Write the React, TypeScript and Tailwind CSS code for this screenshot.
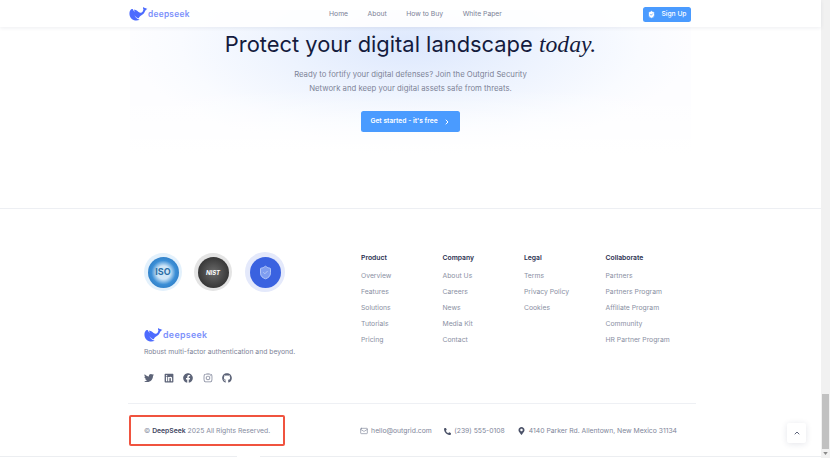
import { ChevronRight, ChevronUp, Mail, ShieldCheck } from "lucide-react";
import { FaFacebook, FaGithub, FaInstagram, FaLinkedin, FaMapMarkerAlt, FaPhoneAlt, FaTwitter } from "react-icons/fa";

function Whale({ className }: { className: string }) {
  return (
    <svg viewBox="0 0 24 18" className={className} fill="#4d6bfe">
      <path d="M23.600 1.600c-.5-.2-.8.3-1.200.6-.9-.9-1.700-1.200-2.600-.9-.4-1-1.200-1.300-1.900-.7-.3.8.1 1.700.5 2.300-.5 1.500-.9 3.100-2.400 4.100-1.200.8-2.600.5-3.900-.5-1.400-1-3-2.900-5.600-3.200-.2 1.100.1 2.100.8 3-1.300-.8-2.100-2-2.500-3.400C3.100 1.400 1.100 3.600.5 6.500-.2 10 1 13.500 3.700 15.600c2.800 2.100 6.700 2.300 9.900.8-1.300-.2-2.500-.7-3.500-1.500-1.200-.9-2.300-2.400-3.500-4.400 1.600 1.900 3.500 3.500 5.900 4 .4-1.600 1.200-2.600 2.400-3.300 2.700-1.600 5-3.500 5.700-6.500 1-.5 1.900-1.200 2.300-2 .2-.4.300-.9.100-1.100z" />
      <circle cx="16.600" cy="5" r=".8" fill="#fff" />
    </svg>
  );
}

function Badge({ ring, inner, children }: { ring: string; inner: string; children: React.ReactNode }) {
  return (
    <div className={`flex h-[38px] w-[38px] items-center justify-center rounded-full ${ring}`}>
      <div className={`flex h-[31px] w-[31px] items-center justify-center rounded-full ${inner}`}>{children}</div>
    </div>
  );
}

const columns = [
  { title: "Product", items: ["Overview", "Features", "Solutions", "Tutorials", "Pricing"] },
  { title: "Company", items: ["About Us", "Careers", "News", "Media Kit", "Contact"] },
  { title: "Legal", items: ["Terms", "Privacy Policy", "Cookies"] },
  { title: "Collaborate", items: ["Partners", "Partners Program", "Affiliate Program", "Community", "HR Partner Program"] },
];

export default function App() {
  return (
    <div className="relative flex h-[458px] w-[830px] overflow-hidden bg-white font-['Inter',sans-serif] text-[#6b7189]">
      <main className="relative flex h-[458px] w-[821px] flex-col">
        <header className="absolute top-0 right-0 left-0 z-10 flex h-[27px] items-center bg-white/90 pt-[1px] pl-[129px] shadow-[0_1px_4px_rgba(30,40,80,0.08)]">
          <div className="flex w-[200px] items-center">
            <Whale className="h-[14px] w-[19px]" />
            <span className="text-[8.300px] leading-none font-semibold tracking-[0.3px] text-[#7b90fb]">deepseek</span>
          </div>
          <nav className="flex gap-[19.500px] text-[6.800px] text-[#7b8196]">
            <span>Home</span>
            <span>About</span>
            <span>How to Buy</span>
            <span>White Paper</span>
          </nav>
          <button className="mr-[130px] ml-auto flex h-[15px] w-[48px] items-center justify-center gap-[5px] rounded-[2.500px] bg-[#4a9bff] text-[6.700px] font-medium text-white">
            <ShieldCheck className="h-[9px] w-[9px]" fill="white" stroke="#4a9bff" />
            Sign Up
          </button>
        </header>

        <section className="relative flex h-[208px] flex-col items-center overflow-hidden pt-[27px]">
          <div className="absolute top-[10px] left-[130px] h-[145px] w-[561px] bg-[linear-gradient(to_bottom,transparent_55%,#ffffff_100%),radial-gradient(ellipse_50%_75%_at_50%_24%,#dde8fd_0%,#edf3fe_45%,#f9fbff_82%,#fdfdff_100%)]" />
          <div className="absolute top-[27px] left-[143px] h-[32px] w-[535px] bg-[radial-gradient(#e0e7f5_0.6px,transparent_0.7px)] bg-[length:8px_8px]" />
          <h1 className="relative text-[21.900px] leading-[34px] font-normal whitespace-nowrap text-[#141b3d]">
            Protect your digital landscape <em className="font-['Liberation_Serif',serif] text-[23.700px]">today.</em>
          </h1>
          <p className="relative mt-[6px] text-center text-[7.750px] leading-[14px] text-[#7d8397]">
            Ready to fortify your digital defenses? Join the Outgrid Security
            <br />
            Network and keep your digital assets safe from threats.
          </p>
          <button className="relative mt-[16px] flex h-[21px] w-[99px] items-center justify-center gap-[5px] rounded-[2.500px] bg-[#4a9bff] text-[6.700px] font-semibold text-white">
            Get started - it's free
            <ChevronRight className="h-[8px] w-[8px]" strokeWidth={3} />
          </button>
        </section>

        <footer className="flex flex-1 flex-col border-t border-[#edeff3]">
          <div className="flex h-[194px] pt-[43px] pl-[144px]">
            <div className="flex w-[217px] flex-col">
              <div className="flex items-center gap-[12px]">
                <Badge ring="bg-[#e3f1fc]" inner="bg-[radial-gradient(#cfe6f7_30%,#3c8fd6_55%,#1f6bb4_100%)]">
                  <span className="text-[9px] font-bold text-[#2b6ea6]">ISO</span>
                </Badge>
                <Badge ring="bg-[#e4e4e4]" inner="bg-[radial-gradient(#6b6b6b,#222222)]">
                  <span className="text-[6px] font-bold text-white italic">NIST</span>
                </Badge>
                <div className="ml-[1px] flex h-[40px] w-[40px] items-center justify-center rounded-full bg-[#e4e9fb]">
                  <div className="flex h-[31px] w-[31px] items-center justify-center rounded-full bg-[#3a62e0]">
                    <ShieldCheck className="h-[15px] w-[15px] text-[#b9cbf7]" fill="#7f9df0" strokeWidth={1.500} />
                  </div>
                </div>
              </div>
              <div className="mt-[36px] flex items-center">
                <Whale className="h-[14px] w-[19px]" />
                <span className="text-[8.800px] leading-none font-semibold tracking-[0.35px] text-[#7b90fb]">deepseek</span>
              </div>
              <p className="mt-[5px] text-[6.800px] leading-[10px] whitespace-nowrap text-[#7d8397]">
                Robust multi-factor authentication and beyond.
              </p>
              <div className="mt-[16px] flex items-center gap-[9.500px] text-[#5d6478]">
                <FaTwitter className="h-[10px] w-[10px]" />
                <FaLinkedin className="h-[10px] w-[10px]" />
                <FaFacebook className="h-[10px] w-[10px]" />
                <FaInstagram className="h-[10px] w-[10px] text-[#80869a]" />
                <FaGithub className="h-[10px] w-[10px]" />
              </div>
            </div>
            <div className="mt-[1px] flex">
              {columns.map((c) => (
                <div key={c.title} className="w-[81.500px]">
                  <h3 className="text-[6.800px] leading-[10px] font-semibold text-[#2a3050]">{c.title}</h3>
                  <ul className="mt-[8px] flex flex-col gap-[6.100px] text-[6.800px] leading-[10px] text-[#8a90a3]">
                    {c.items.map((i) => (
                      <li key={i} className="whitespace-nowrap">{i}</li>
                    ))}
                  </ul>
                </div>
              ))}
            </div>
          </div>
          <div className="mr-[125px] ml-[128px] flex h-[42px] items-center justify-between border-t border-[#eef0f4] pt-[11px]">
            <div className="ml-[1px] flex h-[31px] w-[156px] items-center rounded-[2px] border-2 border-[#f0533f] pt-[2px] pl-[13px] text-[6.800px] whitespace-nowrap text-[#868ca0]">
              <span>
                © <b className="font-semibold text-[#3d4460]">DeepSeek</b> 2025 All Rights Reserved.
              </span>
            </div>
            <div className="mr-[19px] flex items-center gap-[12px] pt-[2px] text-[6.800px] text-[#80869a]">
              <span className="flex items-center gap-[3.500px]">
                <Mail className="h-[8px] w-[8px]" />
                hello@outgrid.com
              </span>
              <span className="mr-[1px] flex items-center gap-[3.500px]">
                <FaPhoneAlt className="h-[7px] w-[7px] text-[#4b5268]" />
                (239) 555-0108
              </span>
              <span className="flex items-center gap-[4px]">
                <FaMapMarkerAlt className="h-[8px] w-[7px] text-[#4b5268]" />
                4140 Parker Rd. Allentown, New Mexico 31134
              </span>
            </div>
          </div>
        </footer>
        <button className="absolute top-[423px] left-[787px] flex h-[20px] w-[19px] items-center justify-center rounded-[2px] bg-white shadow-[0_1px_6px_rgba(30,40,80,0.12)]">
          <ChevronUp className="h-[8px] w-[8px] text-[#3d4460]" strokeWidth={2.500} />
        </button>
        <div className="absolute right-0 bottom-[1px] left-0 flex h-[1px] gap-[23px]">
          <div className="w-[237px] bg-[#eceef1]" />
          <div className="flex-1 bg-[#eceef1]" />
        </div>
      </main>
      <div className="flex h-[458px] w-[9px] flex-col justify-end bg-[#f1f1f1]">
        <div className="mx-[1px] h-[55px] bg-[#c1c1c1]" />
        <div className="flex h-[9px] items-center justify-center text-[#8a8a8a]">
          <svg viewBox="0 0 6 4" className="h-[3px] w-[5px]" fill="currentColor"><path d="M0 0h6L3 4z" /></svg>
        </div>
      </div>
    </div>
  );
}
